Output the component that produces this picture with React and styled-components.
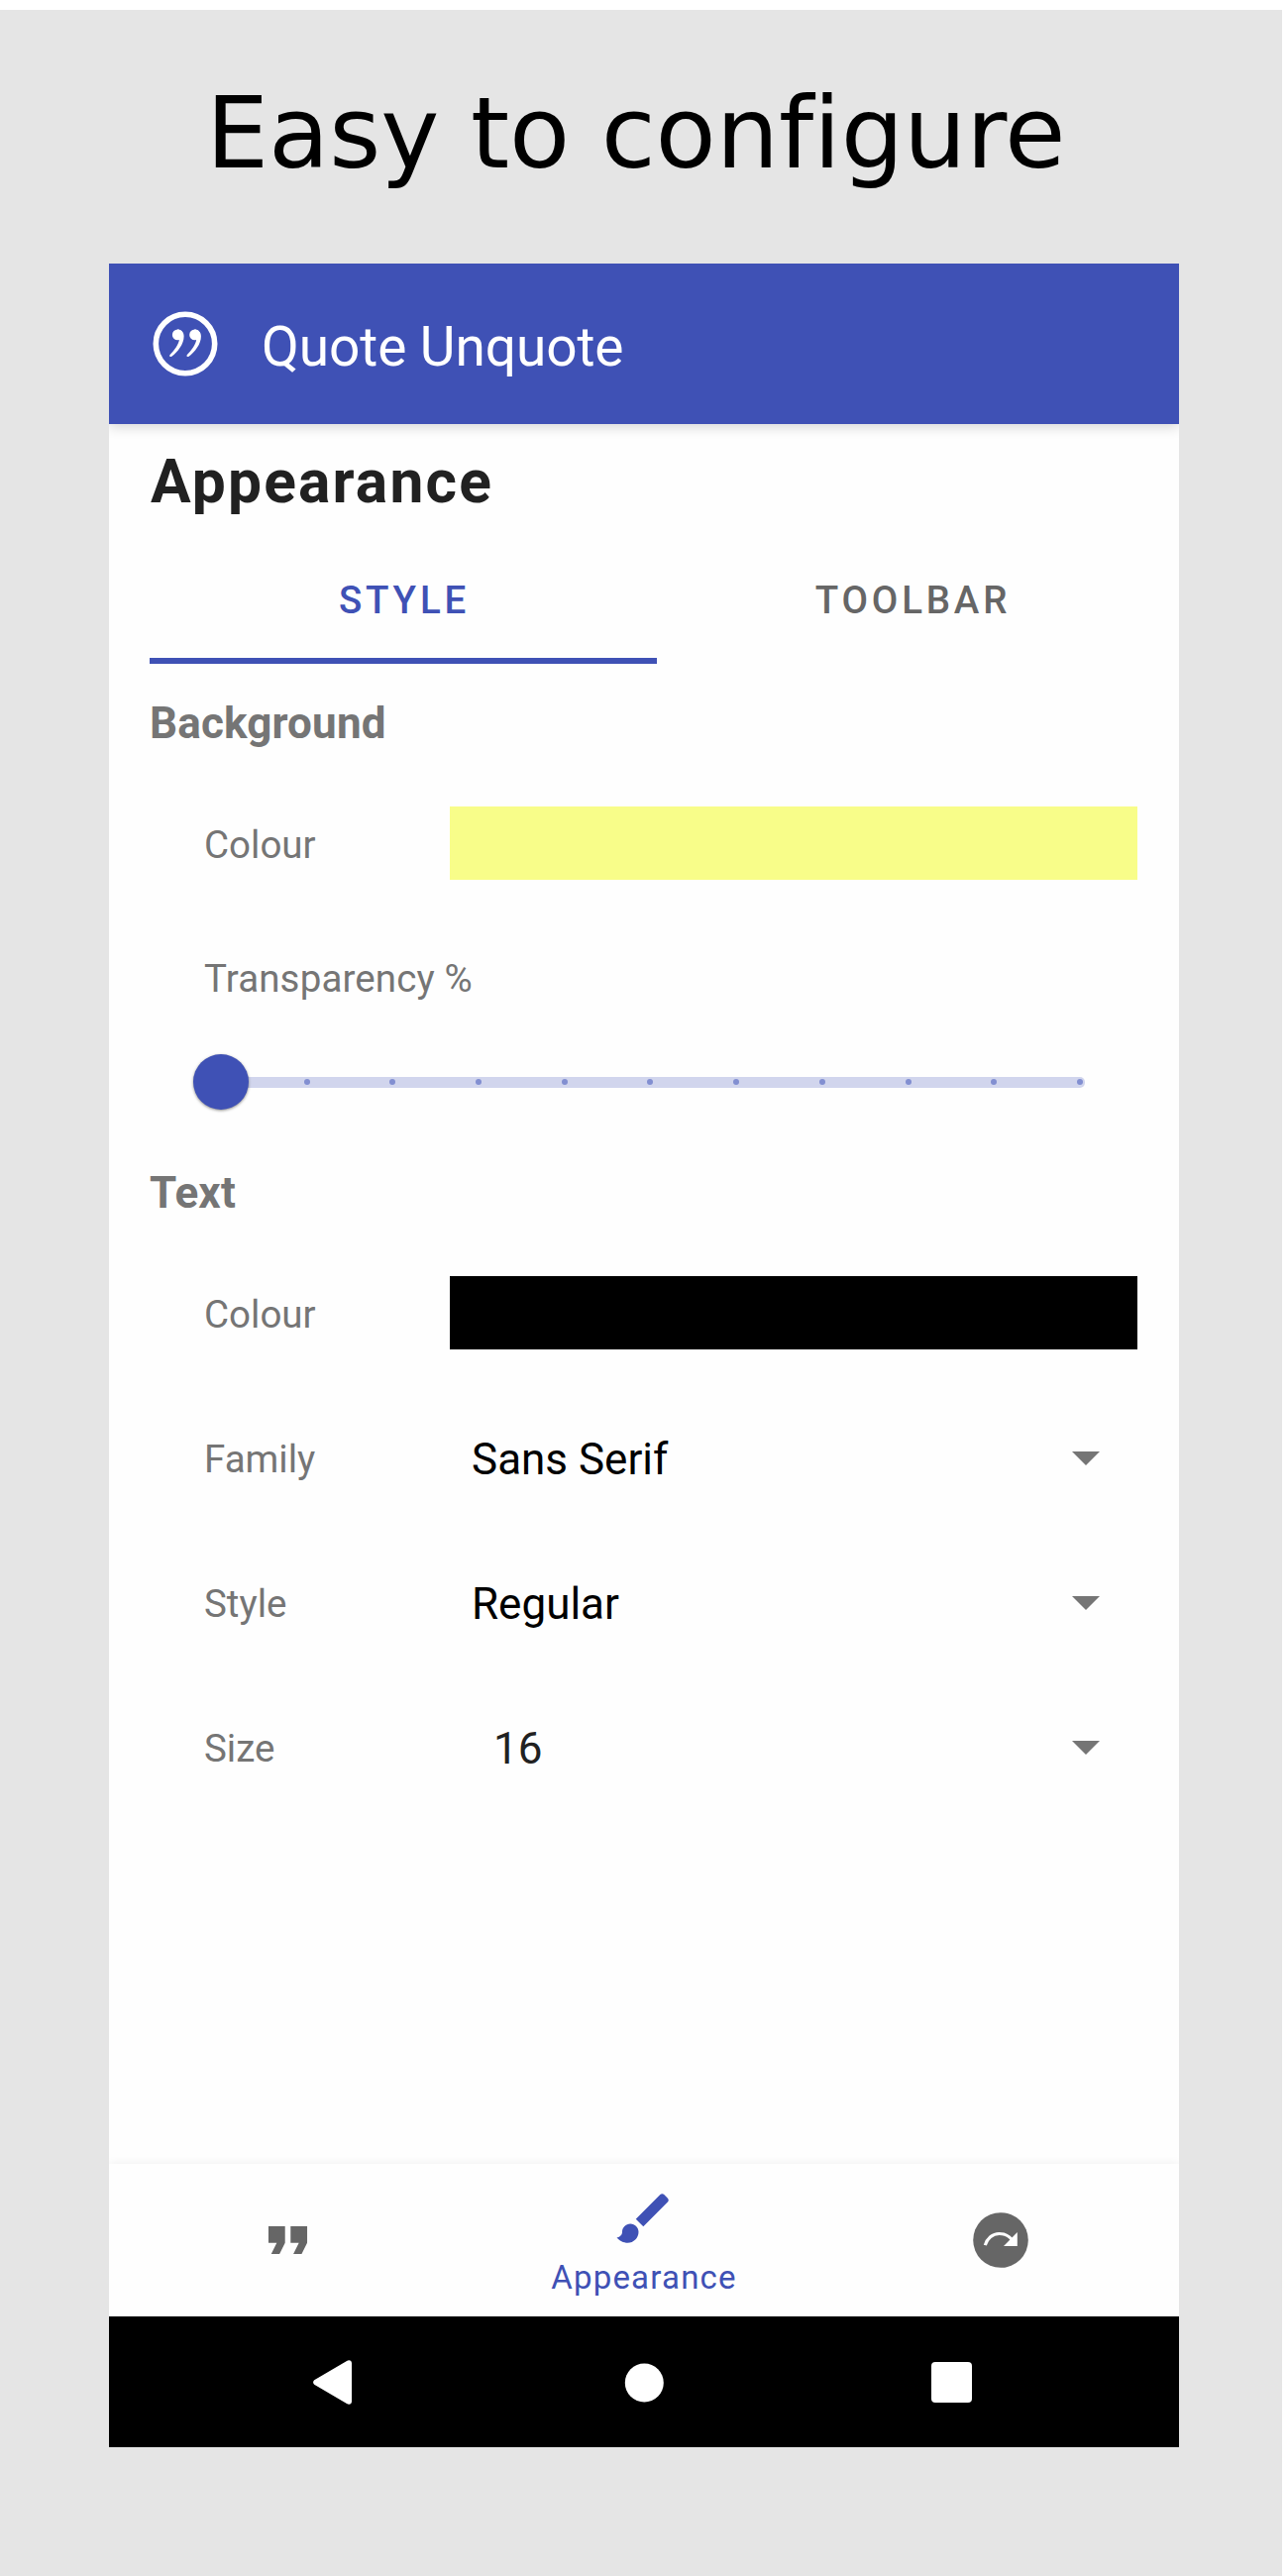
import React from "react";
import styled, { createGlobalStyle, ThemeProvider } from "styled-components";

const theme = {
  primary: "#3f51b5",
  muted: "#757575",
  icon: "#666666",
  ink: "#212121",
};

const GlobalStyle = createGlobalStyle`
  *, *::before, *::after { box-sizing: border-box; }
  body { margin: 0; background: #fff; }
`;

const Page = styled.div`
  width: 1300px;
  height: 2600px;
  padding: 10px 6px 0 0;
  background: #fff;
  overflow: hidden;
  font-family: Roboto, "Noto Sans", sans-serif;
`;

const Backdrop = styled.div`
  height: 2590px;
  padding: 0 104px 0 110px;
  background: #e5e5e5;
`;

const Headline = styled.h1`
  margin: 0;
  height: 256px;
  padding-left: 98px;
  font: 400 100px/249px "DejaVu Sans", sans-serif;
  font-variant-ligatures: none;
  letter-spacing: -0.12px;
  color: #000;
  white-space: nowrap;
`;

const Phone = styled.main`
  display: flex;
  flex-direction: column;
  width: 1080px;
  height: 2204px;
  background: #fefefe;
  overflow: hidden;
`;

const AppBar = styled.header`
  display: flex;
  align-items: center;
  gap: 44px;
  flex: none;
  height: 162px;
  padding-left: 44px;
  background: ${(p) => p.theme.primary};
  box-shadow: 0 3px 12px rgba(0, 0, 0, 0.16);
`;

const AppTitle = styled.div`
  padding-top: 5px;
  font-size: 55px;
  line-height: 70px;
  letter-spacing: -0.08px;
  color: #fff;
`;

const Content = styled.section`
  flex: 1;
  padding: 0 42px 0 41px;
`;

const ScreenTitle = styled.h2`
  margin: 0;
  padding-left: 1px;
  height: 117px;
  font-size: 60.5px;
  font-weight: 700;
  line-height: 117px;
  letter-spacing: 2.15px;
  color: ${(p) => p.theme.ink};
`;

const Tabs = styled.nav`
  display: flex;
  height: 125px;
`;

const Tab = styled.div`
  flex: none;
  width: ${(p) => (p.$active ? 512 : 515)}px;
  padding: 3px 0 0 2px;
  border-bottom: 6px solid ${(p) => (p.$active ? p.theme.primary : "transparent")};
  font-size: 38.5px;
  font-weight: 500;
  line-height: 115px;
  letter-spacing: 3.8px;
  text-align: center;
  color: ${(p) => (p.$active ? p.theme.primary : p.theme.icon)};
`;

const SectionTitle = styled.h3`
  margin: 0;
  height: 108px;
  padding-top: 12px;
  font-size: 44px;
  font-weight: 700;
  line-height: 96px;
  letter-spacing: 0.15px;
  color: ${(p) => p.theme.muted};
`;

const Row = styled.div`
  display: flex;
  align-items: center;
  height: 146px;
  padding-left: 55px;
`;

const Label = styled.div`
  flex: none;
  width: 248px;
  padding-top: 3px;
  font-size: 38.5px;
  line-height: 60px;
  color: ${(p) => p.theme.muted};
`;

const SliderLabel = styled(Label)`
  width: auto;
  height: 127px;
  padding: 0 0 0 55px;
  line-height: 127px;
  letter-spacing: 0.14px;
`;

const Swatch = styled.div`
  flex: 1;
  height: 74px;
  background: ${(p) => p.$color};
`;

const Select = styled.div`
  flex: 1;
  display: flex;
  align-items: center;
  justify-content: space-between;
  padding: 0 38px 0 ${(p) => (p.$inset ? 44 : 22)}px;
  color: ${(p) => (p.$inset ? p.theme.ink : "#000")};
`;

const Value = styled.span`
  padding-top: 4px;
  font-size: 44px;
  line-height: 60px;
`;

const Caret = styled.span`
  width: 28px;
  height: 14px;
  margin-top: 2px;
  background: ${(p) => p.theme.muted};
  clip-path: polygon(0 0, 100% 0, 50% 100%);
`;

const Slider = styled.div`
  position: relative;
  display: flex;
  align-items: center;
  height: 82px;
  margin: 0 53px 11px 66px;
`;

const Track = styled.div`
  display: flex;
  flex: 1;
  justify-content: space-between;
  align-items: center;
  height: 11px;
  padding: 0 2px 0 3px;
  border-radius: 5px;
  background: #d1d5ed;
`;

const Tick = styled.i`
  width: 6px;
  height: 6px;
  border-radius: 50%;
  background: #828fd1;
`;

const Thumb = styled.div`
  position: absolute;
  left: -22px;
  top: 13px;
  width: 56px;
  height: 56px;
  border-radius: 50%;
  background: ${(p) => p.theme.primary};
  box-shadow: 0 1px 3px rgba(0, 0, 0, 0.45);
`;

const BottomNav = styled.nav`
  display: flex;
  flex: none;
  height: 154px;
  background: #fefefe;
  box-shadow: 0 0 9px rgba(0, 0, 0, 0.07);
`;

const NavItem = styled.div`
  flex: 1;
  display: flex;
  flex-direction: column;
  align-items: center;
  justify-content: ${(p) => (p.$active ? "flex-start" : "center")};
  padding-top: ${(p) => (p.$active ? 22 : 0)}px;
  color: ${(p) => (p.$active ? p.theme.primary : p.theme.icon)};
`;

const NavLabel = styled.span`
  margin-top: -6px;
  font-size: 33px;
  line-height: 66px;
  letter-spacing: 1.2px;
`;

const SystemBar = styled.footer`
  display: flex;
  flex: none;
  justify-content: space-between;
  align-items: center;
  height: 132px;
  padding: 1px 209px 0 206px;
  background: #000;
`;

const LogoIcon = () => (
  <svg width="66" height="66" viewBox="0 0 66 66">
    <circle cx="33" cy="33" r="29.7" fill="none" stroke="#fff" strokeWidth="5.6" />
    {[0, 17.3].map((dx) => (
      <g key={dx} transform={`translate(${dx} 0)`}>
        <circle cx="25.3" cy="23.9" r="5.4" fill="#fff" />
        <path
          d="M25 18.5c4 0 6.600 2.700 6.600 7 0 8-6.200 15.500-12.300 20.300-1.400 1-2.900-.6-1.700-1.900 4.500-4.400 8.400-9.600 9.400-15.400z"
          fill="#fff"
        />
      </g>
    ))}
  </svg>
);

const QuoteIcon = () => (
  <svg width="67" height="67" viewBox="0 0.180 24 24" fill="currentColor">
    <path d="M14 17h3l2-4V7h-6v6h3zM6 17h3l2-4V7H5v6h3z" />
  </svg>
);

const BrushIcon = () => (
  <svg width="66" height="66" viewBox="0 0 24 24" fill="currentColor">
    <path d="M7 14c-1.660 0-3 1.340-3 3 0 1.310-1.160 2-2 2 .92 1.220 2.490 2 4 2 2.210 0 4-1.790 4-4 0-1.660-1.340-3-3-3zm13.710-9.370l-1.340-1.340c-.39-.39-1.020-.39-1.410 0L9 12.250 11.750 15l8.960-8.960c.39-.39.39-1.020 0-1.410z" />
  </svg>
);

const RedoIcon = () => (
  <svg width="56" height="56" viewBox="0 0 56 56">
    <circle cx="28" cy="28" r="27.800" fill="currentColor" />
    <path d="M12.300 33.200C14.200 26.400 19.800 21.500 26.500 21.500c5 0 9.500 2 12.500 5.500" fill="none" stroke="#fefefe" strokeWidth="3.100" />
    <path d="M44.800 20v14H31z" fill="#fefefe" />
  </svg>
);

const BackIcon = () => (
  <svg width="39" height="45" viewBox="0 0 39 45">
    <path d="M34 .9C36.500-.6 39 .6 39 3.200v38.600c0 2.600-2.500 3.800-5 2.300L1.600 25c-2-1.300-2-3.700 0-5z" fill="#fff" />
  </svg>
);

const HomeIcon = () => (
  <svg width="44" height="40" viewBox="0 0 44 40">
    <circle cx="24.300" cy="20" r="19.500" fill="#fff" />
  </svg>
);

const RecentsIcon = () => (
  <svg width="41" height="41" viewBox="0 0 41 41">
    <rect width="41" height="41" rx="4" fill="#fff" />
  </svg>
);

const TICKS = Array.from({ length: 11 }, (_, i) => i * 10);

const SELECTS = [
  { label: "Family", value: "Sans Serif" },
  { label: "Style", value: "Regular" },
  { label: "Size", value: "16", inset: true },
];

export default function App() {
  return (
    <ThemeProvider theme={theme}>
      <GlobalStyle />
      <Page>
        <Backdrop>
          <Headline>Easy to configure</Headline>
          <Phone>
            <AppBar>
              <LogoIcon />
              <AppTitle>Quote Unquote</AppTitle>
            </AppBar>
            <Content>
              <ScreenTitle>Appearance</ScreenTitle>
              <Tabs>
                <Tab $active>STYLE</Tab>
                <Tab>TOOLBAR</Tab>
              </Tabs>
              <SectionTitle>Background</SectionTitle>
              <Row>
                <Label>Colour</Label>
                <Swatch $color="#f8fd89" />
              </Row>
              <SliderLabel>Transparency %</SliderLabel>
              <Slider>
                <Track>
                  {TICKS.map((t) => (
                    <Tick key={t} />
                  ))}
                </Track>
                <Thumb />
              </Slider>
              <SectionTitle>Text</SectionTitle>
              <Row>
                <Label>Colour</Label>
                <Swatch $color="#000" />
              </Row>
              {SELECTS.map((s) => (
                <Row key={s.label}>
                  <Label>{s.label}</Label>
                  <Select $inset={s.inset}>
                    <Value>{s.value}</Value>
                    <Caret />
                  </Select>
                </Row>
              ))}
            </Content>
            <BottomNav>
              <NavItem>
                <QuoteIcon />
              </NavItem>
              <NavItem $active>
                <BrushIcon />
                <NavLabel>Appearance</NavLabel>
              </NavItem>
              <NavItem>
                <RedoIcon />
              </NavItem>
            </BottomNav>
            <SystemBar>
              <BackIcon />
              <HomeIcon />
              <RecentsIcon />
            </SystemBar>
          </Phone>
        </Backdrop>
      </Page>
    </ThemeProvider>
  );
}
